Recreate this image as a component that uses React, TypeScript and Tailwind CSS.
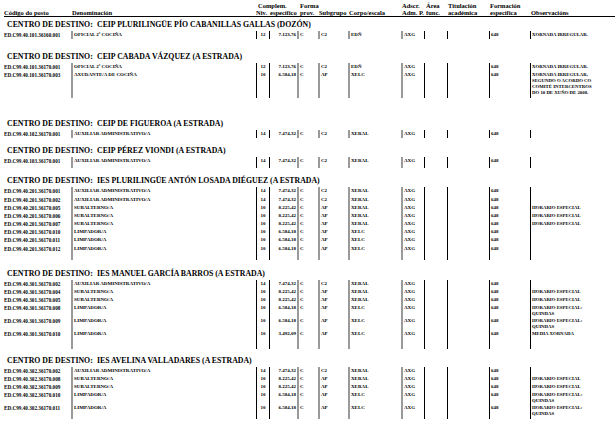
import React from "react";

const COLS =
  "grid grid-cols-[67px_185px_13px_28px_21px_30px_53px_23px_23px_42px_41px_85px]";
const G = "border-l-2 border-[#9a9a9a]";
const B = "border-l border-black";

type Row = {
  c: string;
  d: string;
  n: string;
  v: string;
  s: string;
  k: string;
  o?: string[];
  h: string;
};

type Section = {
  name: string;
  mt: string;
  rows: Row[];
  tail?: string;
};

const AUX = { d: "AUXILIAR ADMINISTRATIVO/A", n: "14", v: "7.474,32", s: "C2", k: "XERAL" };
const SUB = { d: "SUBALTERNO/A", n: "10", v: "8.225,42", s: "AP", k: "XERAL" };
const LIM = { d: "LIMPADOR/A", n: "10", v: "6.584,18", s: "AP", k: "XELC" };
const S = "h-[8.2px]";
const T = "h-[13px]";
const HE = ["HORARIO ESPECIAL"];
const HQ = ["HORARIO ESPECIAL:", "QUINDAS"];

const sections: Section[] = [
  {
    name: "CEIP PLURILINGÜE PÍO CABANILLAS GALLAS (DOZÓN)",
    mt: "mt-[2px]",
    rows: [
      { c: "ED.C99.40.101.36160.001", d: "OFICIAL 2ª COCIÑA", n: "12", v: "7.123,76", s: "C2", k: "EDÑ", o: ["XORNADA IRREGULAR."], h: S },
    ],
  },
  {
    name: "CEIP CABADA VÁZQUEZ (A ESTRADA)",
    mt: "mt-[11.8px]",
    rows: [
      { c: "ED.C99.40.101.36170.001", d: "OFICIAL 2ª COCIÑA", n: "12", v: "7.123,76", s: "C2", k: "EDÑ", o: ["XORNADA IRREGULAR."], h: S },
      {
        c: "ED.C99.40.101.36170.003",
        d: "AXUDANTE/A DE COCIÑA",
        n: "10",
        v: "6.584,18",
        s: "AP",
        k: "XELC",
        o: ["XORNADA IRREGULAR,", "SEGUNDO O ACORDO CO", "COMITÉ INTERCENTROS", "DO 10 DE XUÑO DE 2008."],
        h: "h-[27px]",
      },
    ],
  },
  {
    name: "CEIP DE FIGUEROA (A ESTRADA)",
    mt: "mt-[20px]",
    rows: [{ c: "ED.C99.40.102.36170.001", ...AUX, h: S }],
  },
  {
    name: "CEIP PÉREZ VIONDI (A ESTRADA)",
    mt: "mt-[6.8px]",
    rows: [{ c: "ED.C99.40.103.36170.001", ...AUX, h: S }],
    tail: "h-[3px]",
  },
  {
    name: "IES PLURILINGÜE ANTÓN LOSADA DIÉGUEZ (A ESTRADA)",
    mt: "mt-[7px]",
    rows: [
      { c: "ED.C99.40.201.36170.001", ...AUX, h: S },
      { c: "ED.C99.40.201.36170.002", ...AUX, h: S },
      { c: "ED.C99.40.201.36170.005", ...SUB, o: HE, h: S },
      { c: "ED.C99.40.201.36170.006", ...SUB, o: HE, h: S },
      { c: "ED.C99.40.201.36170.007", ...SUB, o: HE, h: S },
      { c: "ED.C99.40.201.36170.010", ...LIM, h: S },
      { c: "ED.C99.40.201.36170.011", ...LIM, h: S },
      { c: "ED.C99.40.201.36170.012", ...LIM, h: S },
    ],
    tail: "h-[7px]",
  },
  {
    name: "IES MANUEL GARCÍA BARROS (A ESTRADA)",
    mt: "mt-[8px]",
    rows: [
      { c: "ED.C99.40.301.36170.002", ...AUX, h: S },
      { c: "ED.C99.40.301.36170.004", ...SUB, o: HE, h: S },
      { c: "ED.C99.40.301.36170.005", ...SUB, o: HE, h: S },
      { c: "ED.C99.40.301.36170.008", ...LIM, o: HQ, h: T },
      { c: "ED.C99.40.301.36170.009", ...LIM, o: HQ, h: T },
      { c: "ED.C99.40.301.36170.010", ...LIM, v: "3.492,09", o: ["MEDIA XORNADA"], h: S },
    ],
    tail: "h-[10px]",
  },
  {
    name: "IES AVELINA VALLADARES (A ESTRADA)",
    mt: "mt-[6px]",
    rows: [
      { c: "ED.C99.40.302.36170.002", ...AUX, h: S },
      { c: "ED.C99.40.302.36170.008", ...SUB, o: HE, h: S },
      { c: "ED.C99.40.302.36170.009", ...SUB, o: HE, h: S },
      { c: "ED.C99.40.302.36170.010", ...LIM, o: HQ, h: T },
      { c: "ED.C99.40.302.36170.011", ...LIM, o: HQ, h: T },
    ],
    tail: "h-[2px]",
  },
];

const cell = "leading-[8.2px] whitespace-nowrap overflow-visible";

function DataRow({ r }: { r: Row }) {
  const multi = (r.o?.length ?? 0) > 1;
  return (
    <div className={`${COLS} ${r.h} text-[5px]`}>
      <div className={`${cell} text-[5.2px]`}>{r.c}</div>
      <div className={`${cell} ${G} pl-[1px]`}>{r.d}</div>
      <div className={`${cell} ${B} text-center`}>{r.n}</div>
      <div className={`${cell} ${B} text-right pr-[1px]`}>{r.v}</div>
      <div className={`${cell} ${G} pl-[1px]`}>C</div>
      <div className={`${cell} ${G} pl-[1px]`}>{r.s}</div>
      <div className={`${cell} ${G} pl-[1px]`}>{r.k}</div>
      <div className={`${cell} ${G} pl-[1px]`}>AXG</div>
      <div className={`${cell} ${B}`}></div>
      <div className={`${cell} ${B}`}></div>
      <div className={`${cell} ${B} pl-[1px]`}>648</div>
      <div className={`${B} pl-[1px] whitespace-nowrap text-[4.8px] ${multi ? "pt-[1px] leading-[5.9px]" : "leading-[8.2px]"}`}>
        {r.o?.map((l, i) => (
          <div key={i}>{l}</div>
        ))}
      </div>
    </div>
  );
}

function Tail({ h }: { h: string }) {
  return (
    <div className={`${COLS} ${h}`}>
      <div></div>
      <div className={G}></div>
      <div className={B}></div>
      <div className={B}></div>
      <div className={G}></div>
      <div className={G}></div>
      <div className={G}></div>
      <div className={G}></div>
      <div className={B}></div>
      <div className={B}></div>
      <div className={B}></div>
      <div className={B}></div>
    </div>
  );
}

export default function App() {
  return (
    <div className="w-[615px] h-[439px] overflow-hidden bg-white text-black font-bold font-['Liberation_Serif','Times_New_Roman',serif]">
      <div className="pl-[4px]">
        <div className={`${COLS} h-[17px] border-b border-black text-[6.5px] leading-[7px] pt-[1.5px] whitespace-nowrap`}>
          <div>
            <div>&nbsp;</div>
            <div>Código do posto</div>
          </div>
          <div className="pl-[1px]">
            <div>&nbsp;</div>
            <div>Denominación</div>
          </div>
          <div className="col-span-2">
            <div className="pl-[2px]">Complem.</div>
            <div className="flex">
              <span className="w-[14px]">Niv.</span>
              <span>específico</span>
            </div>
          </div>
          <div className="pl-[3px]">
            <div>Forma</div>
            <div>prov.</div>
          </div>
          <div className="pl-[1px]">
            <div>&nbsp;</div>
            <div>Subgrupo</div>
          </div>
          <div className="pl-[1px]">
            <div>&nbsp;</div>
            <div>Corpo/escala</div>
          </div>
          <div className="pl-[1px]">
            <div>Adscr.</div>
            <div>Adm. P.</div>
          </div>
          <div className="pl-[2px]">
            <div>Área</div>
            <div>func.</div>
          </div>
          <div className="pl-[1px]">
            <div>Titulación</div>
            <div>académica</div>
          </div>
          <div className="pl-[1px]">
            <div>Formación</div>
            <div>específica</div>
          </div>
          <div className="pl-[1px]">
            <div>&nbsp;</div>
            <div>Observacións</div>
          </div>
        </div>

        {sections.map((sec, i) => (
          <div key={i}>
            <div className={`${sec.mt} h-[12px] flex items-center pl-[3px] text-[7.8px] leading-[12px] whitespace-nowrap`}>
              <span className="w-[90px]">CENTRO DE DESTINO:</span>
              <span>{sec.name}</span>
            </div>
            {sec.rows.map((r, j) => (
              <DataRow key={j} r={r} />
            ))}
            {sec.tail && <Tail h={sec.tail} />}
          </div>
        ))}
      </div>
    </div>
  );
}
